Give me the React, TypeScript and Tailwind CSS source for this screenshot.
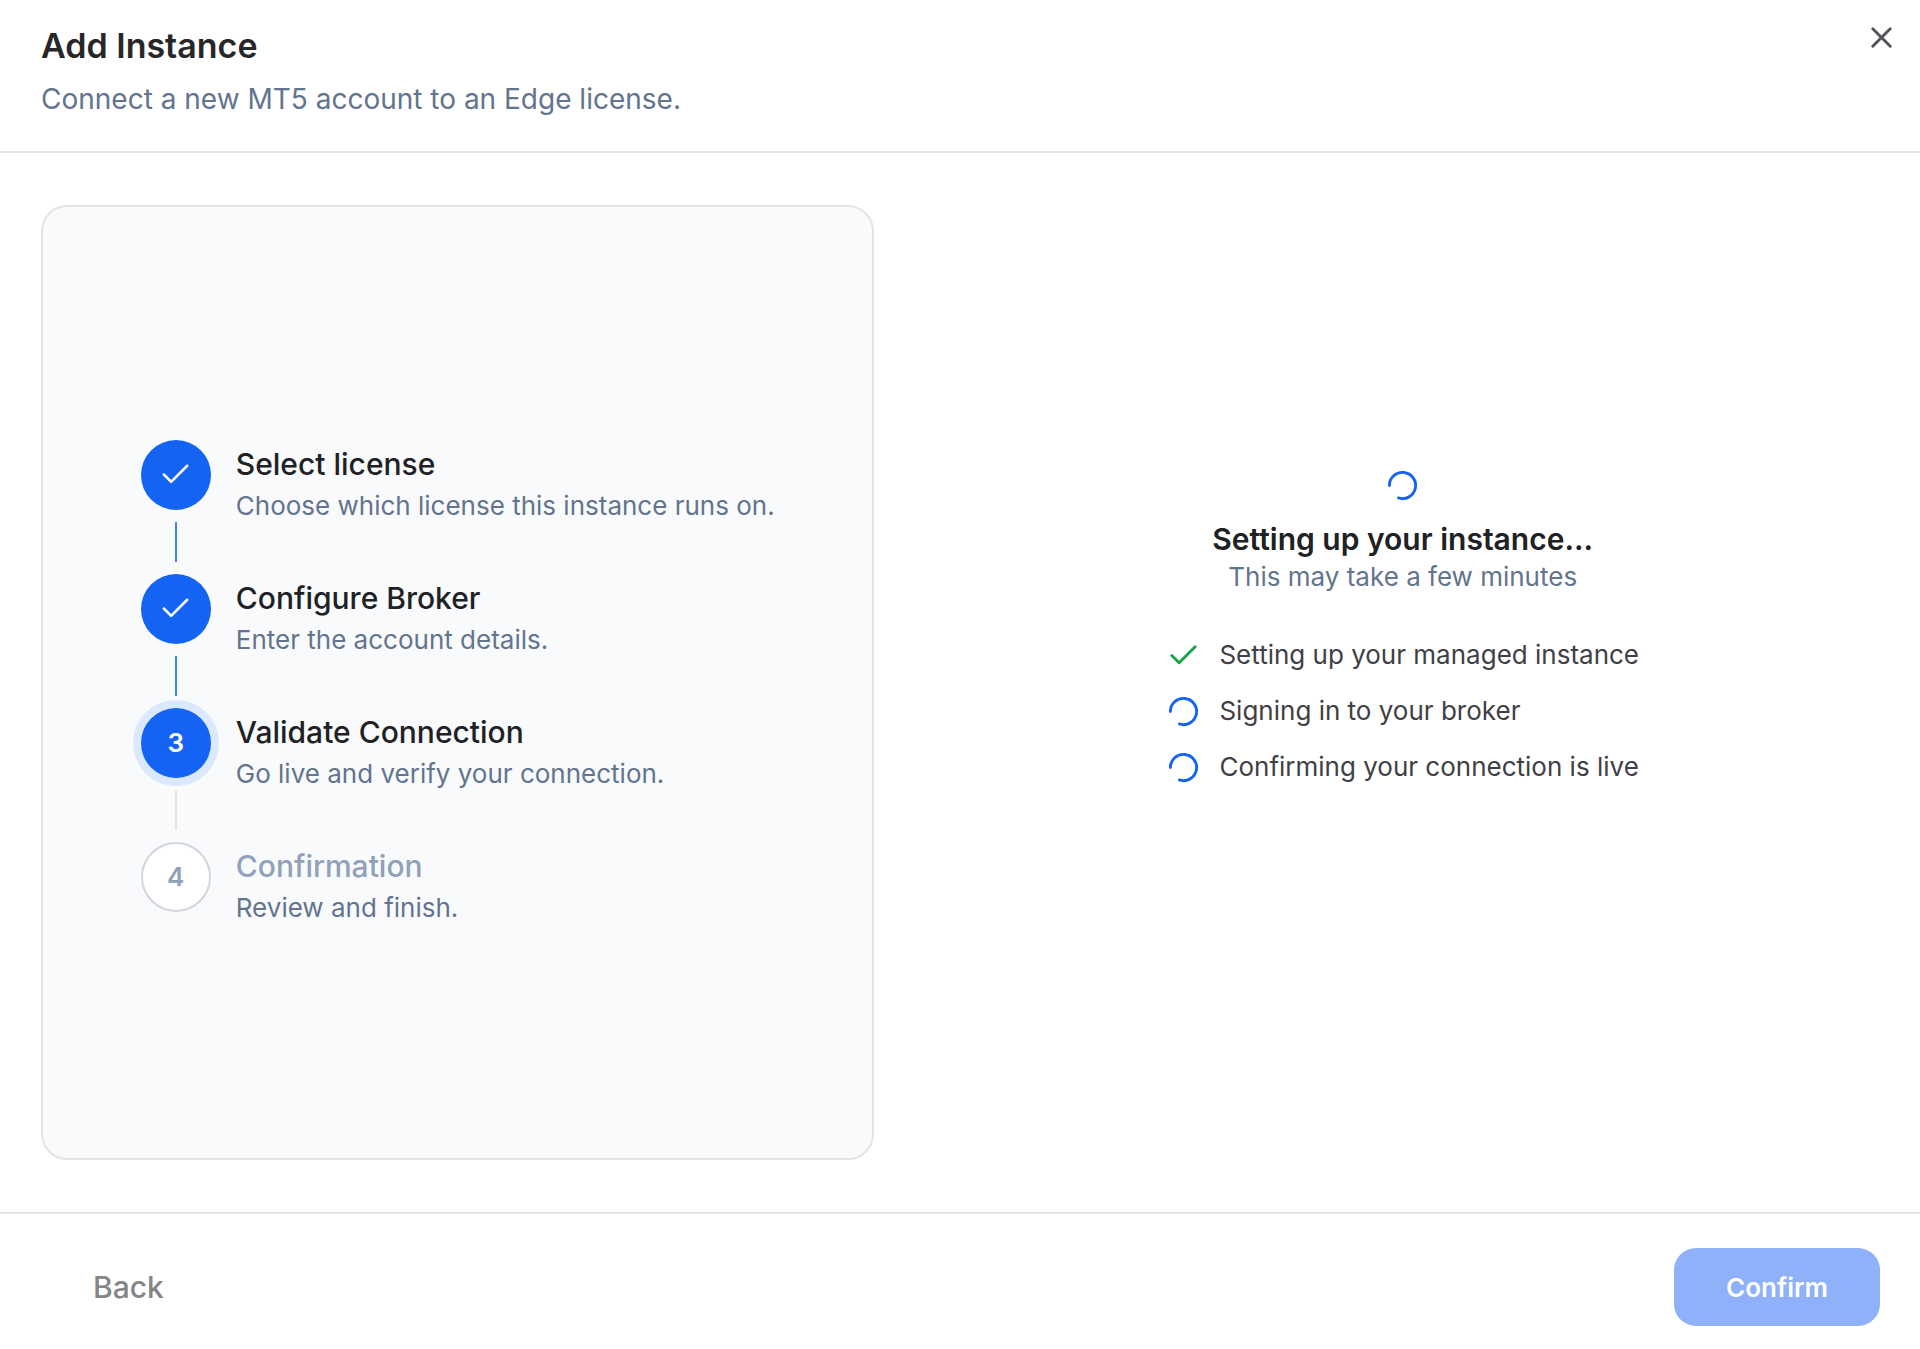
import React from 'react'
import { Check, LoaderCircle, X } from 'lucide-react'

type StepState = 'done' | 'current' | 'upcoming'

interface Step {
  title: string
  description: string
  state: StepState
}

interface Task {
  label: string
  done: boolean
}

const steps: Step[] = [
  { title: 'Select license', description: 'Choose which license this instance runs on.', state: 'done' },
  { title: 'Configure Broker', description: 'Enter the account details.', state: 'done' },
  { title: 'Validate Connection', description: 'Go live and verify your connection.', state: 'current' },
  { title: 'Confirmation', description: 'Review and finish.', state: 'upcoming' },
]

const tasks: Task[] = [
  { label: 'Setting up your managed instance', done: true },
  { label: 'Signing in to your broker', done: false },
  { label: 'Confirming your connection is live', done: false },
]

const circleStyles: Record<StepState, string> = {
  done: 'bg-[#1463f3] text-white',
  current: 'bg-[#1463f3] text-white ring-8 ring-[#dbe9fe]',
  upcoming: 'border-2 border-[#d1d5dc] bg-white text-[#90a1b9]',
}

const Spinner: React.FC = () => <LoaderCircle size={35} className="shrink-0 rotate-180 text-[#1463f3]" />

const StepItem: React.FC<{ step: Step; index: number; last: boolean }> = ({ step, index, last }) => (
  <li className="flex gap-[25px]">
    <div className="flex flex-col items-center">
      <div
        className={`flex size-[70px] items-center justify-center rounded-full text-[26px] font-semibold ${circleStyles[step.state]}`}
      >
        {step.state === 'done' ? <Check size={35} strokeWidth={1.75} /> : index + 1}
      </div>
      {!last && (
        <div className={`my-3 h-10 w-[2px] ${step.state === 'done' ? 'bg-[#4080f5]' : 'bg-[#e4e4e7]'}`} />
      )}
    </div>
    <div className="flex flex-col gap-1 pt-1">
      <h3
        className={`text-[30px] leading-[40px] font-medium ${step.state === 'upcoming' ? 'text-[#90a1b9]' : 'text-[#202124]'}`}
      >
        {step.title}
      </h3>
      <p className="text-[26px] leading-[36px] text-[#62748e]">{step.description}</p>
    </div>
  </li>
)

const App: React.FC = () => {
  return (
    <div className="flex min-h-screen flex-col bg-white font-['Inter',sans-serif]">
      <header className="flex items-start justify-between border-b-2 border-[#e4e4e7] pt-5 pr-[21px] pb-[34px] pl-[41px]">
        <div className="flex flex-col gap-[9px]">
          <h1 className="text-[34px] leading-[52px] font-semibold text-[#27272a]">Add Instance</h1>
          <p className="text-[28px] leading-[36px] text-[#62748e]">Connect a new MT5 account to an Edge license.</p>
        </div>
        <button type="button" aria-label="Close" className="text-[#52525b]">
          <X size={35} />
        </button>
      </header>

      <main className="grid flex-1 grid-cols-[7fr_8fr] gap-[52px] px-[41px] py-[52px]">
        <section className="flex items-center justify-center rounded-[26px] border-2 border-[#e4e4e7] bg-[#f9fafc]">
          <ol>
            {steps.map((step, i) => (
              <StepItem key={step.title} step={step} index={i} last={i === steps.length - 1} />
            ))}
          </ol>
        </section>

        <section className="flex flex-col items-center justify-center pb-28">
          <Spinner />
          <h2 className="mt-4 text-[30px] leading-[40px] font-semibold text-[#202124]">Setting up your instance...</h2>
          <p className="text-[26px] leading-[36px] text-[#62748e]">This may take a few minutes</p>
          <ul className="mt-[42px] flex flex-col gap-5">
            {tasks.map((task) => (
              <li key={task.label} className="flex items-center gap-[18px] text-[26px] leading-[36px] text-[#3f3f46]">
                {task.done ? <Check size={35} className="shrink-0 text-[#16a34a]" /> : <Spinner />}
                {task.label}
              </li>
            ))}
          </ul>
        </section>
      </main>

      <footer className="flex items-center justify-between border-t-2 border-[#e4e4e7] px-10 pt-[34px] pb-[23px]">
        <button type="button" className="px-[53px] text-[30px] font-medium text-[#858585]">
          Back
        </button>
        <button
          type="button"
          disabled
          className="h-[78px] rounded-[22px] bg-[#8fb1f9] px-[52px] text-[26px] font-semibold text-white"
        >
          Confirm
        </button>
      </footer>
    </div>
  )
}

export default App
